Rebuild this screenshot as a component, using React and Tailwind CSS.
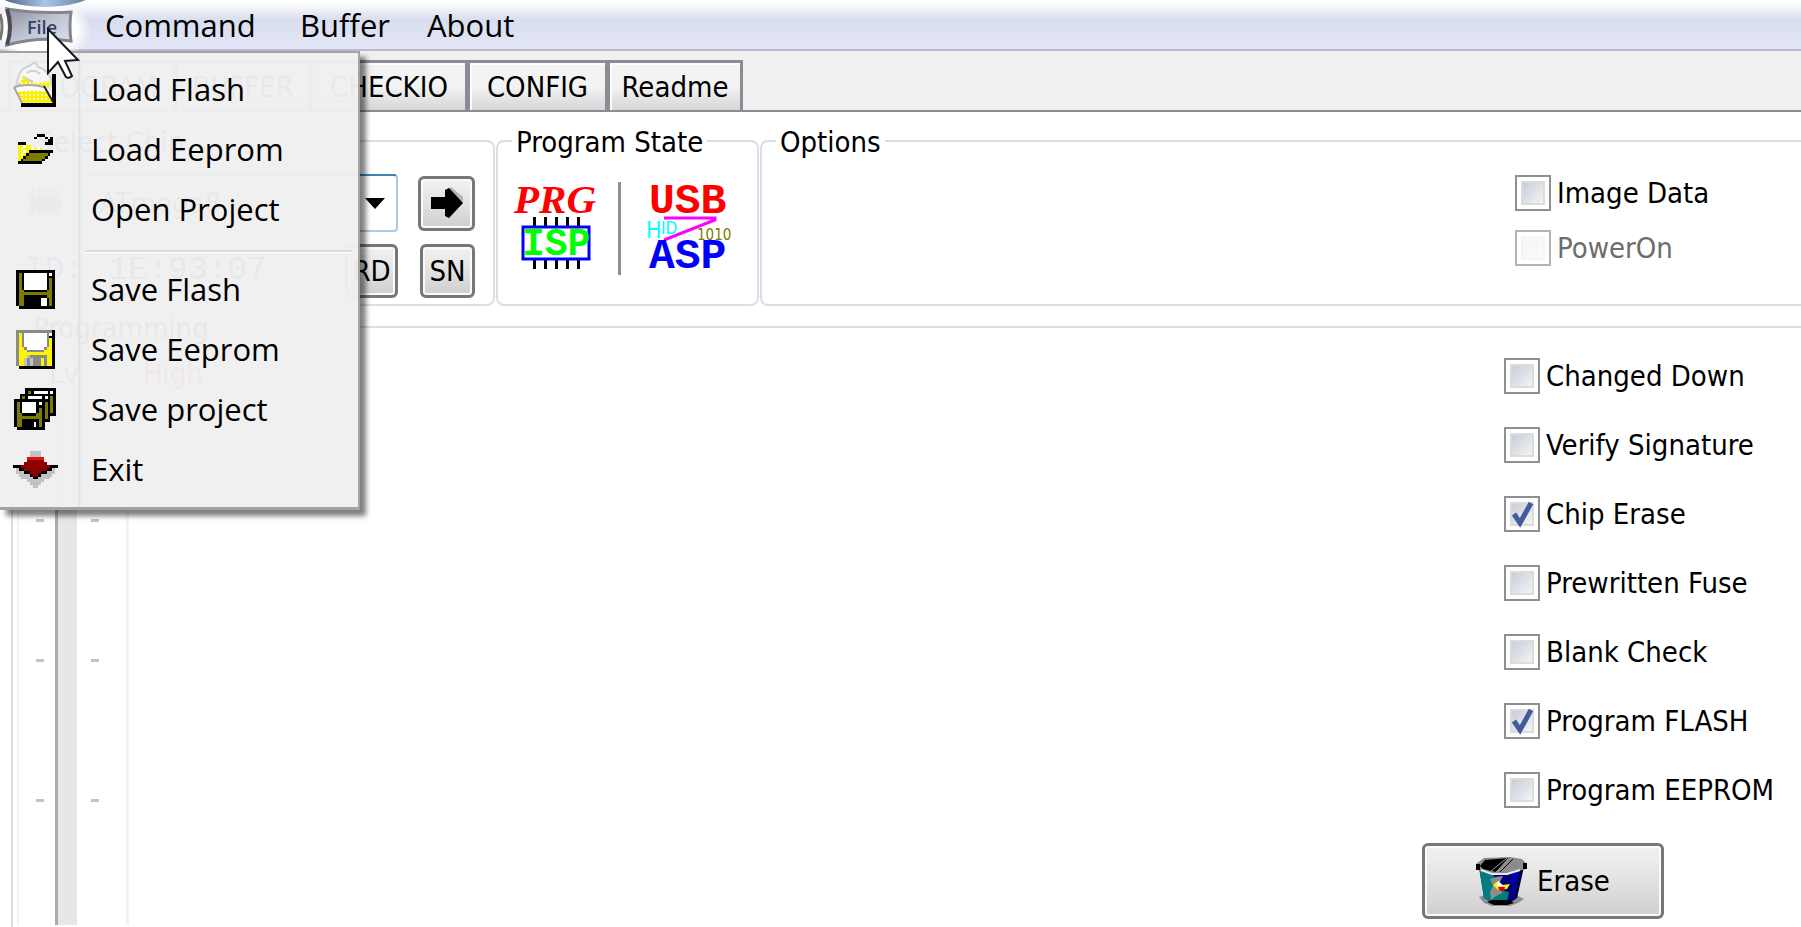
const COLORS = {
  K: "#000000",
  O: "#7d7a00",
  W: "#ffffff",
  Y: "#fdf500",
  G: "#8a8a8a",
  L: "#c2c2c2",
  R: "#e01010",
  D: "#8c0000",
};

function PixelIcon({ rows, className }) {
  const width = Math.max(...rows.map((r) => r.length));
  return (
    <svg className={className} viewBox={`0 0 ${width} ${rows.length}`} preserveAspectRatio="none" shapeRendering="crispEdges" aria-hidden="true">
      {rows.flatMap((row, y) =>
        [...row].map((c, x) =>
          COLORS[c] ? <rect key={`${x}-${y}`} x={x} y={y} width="1" height="1" fill={COLORS[c]} /> : null
        )
      )}
    </svg>
  );
}

const FOLDER = [
  ".......KKK...",
  "......K...K.K",
  "...........KK",
  "KKK.......KKK",
  "YYWYY........",
  "YWYYYWYWY....",
  "YYWYKKKKKKKKK",
  "YWYKOOOOOOOK.",
  "YYKOOOOOOOK..",
  "YKOOOOOOOK...",
  "KKKKKKKKK....",
];

const FLOPPY = [
  "KKKKKKKKKKKKKK",
  "KOKWWWWWWWWKWK",
  "KOKWWWWWWWWKKK",
  "KOKWWWWWWWWKOK",
  "KOKWWWWWWWWKOK",
  "KOKWWWWWWWWKOK",
  "KOKWWWWWWWWKOK",
  "KOOKKKKKKKKOOK",
  "KOOOOOOOOOOOOK",
  "KOOKKKKKKKKOOK",
  "KOOKKKKKKWWKOK",
  "KOOKKKKKKWWKOK",
  "KOOKKKKKKWWKOK",
  ".KKKKKKKKKKKKK",
];

const FLOPPY_YELLOW = [
  "GGGGGGGGGGGGGK",
  "GYGWWWWWWWWGWK",
  "GYGWWWWWWWWGKK",
  "GYGWWWWWWWWGYK",
  "GYGWWWWWWWWGYK",
  "GYGWWWWWWWWGYK",
  "GYYGWWWWWWGYYK",
  "GYYYGGGGGGYYYK",
  "GYYYYYYYYYYYYK",
  "GYYYLGGGGGGYYK",
  "GYYLGLGGGYGYYK",
  "GYYLGLGGGYGYYK",
  "GYYLGLGGGYGYYK",
  ".KKKKKKKKKKKKK",
];

const FLOPPIES = [
  "....KKKKKKKKKKK",
  "....KOKWWWWWKWK",
  "..KKKKKKKKKKKKK",
  "..KOKWWWWWKWKOK",
  "KKKKKKKKKKKKKOK",
  "KOKWWWWWKWKOKOK",
  "KOKWWWWWKKKOKOK",
  "KOKWWWWWKOKOKOK",
  "KOKWWWWWKOKOKOK",
  "KOOKKKKKOOKOKKK",
  "KOOOOOOOOOKOK..",
  "KOOKKKKKKOKKK..",
  "KOOKKKKWKOK....",
  "KOOKKKKWKOK....",
  ".KKKKKKKKKK....",
];

const EXIT = [
  "......LLLL......",
  "......LLLL......",
  ".....RRRRRR.....",
  ".....DDDDDD.....",
  "....DDDDDDDD....",
  "KKKDDDDDDDDDDKKK",
  ".LKKDDDDDDDDKKL.",
  ".LLLKKDDDDKKLLL.",
  "..LLLLKDDKLLLL..",
  "...LLLLKKLLLL...",
  ".....LLLLLL.....",
  "......LLLL......",
  ".......LL.......",
];

function MagnifiedFolder() {
  return (
    <svg className="mb-2 h-[46px] w-[44px]" viewBox="0 0 44 46" aria-hidden="true">
      <defs>
        <pattern id="dots" width="4" height="4" patternUnits="userSpaceOnUse">
          <rect width="4" height="4" fill="#f8f000" />
          <rect width="2" height="2" fill="#fffbb0" />
        </pattern>
      </defs>
      <path d="M4 22 Q5 7 16 4 L22 0 L25 5 Q37 8 39 22 Z" fill="#f6f6f6" stroke="#d2d2d2" strokeWidth="2" />
      <path d="M7 22 L10 13 L18 19 L24 21 L37 19 L37 26 L7 25 Z" fill="url(#dots)" />
      <path d="M14 11 Q21 6 27 12 M12 16 L20 20" fill="none" stroke="#cfcfcf" strokeWidth="2" />
      <path d="M39 12 H43 V45 H8 V41 H39 Z" fill="#000" />
      <path d="M1 25 Q16 21 31 25 L40 41 H9 Z" fill="url(#dots)" />
      <path d="M1 24 Q16 20 31 24 L34 30 Q18 27 4 30 Z" fill="#ffffff" />
      <path d="M1 25 Q16 21 31 25 M1 25 L9 41" fill="none" stroke="#a6a6a6" strokeWidth="2" />
      <path d="M31 24 L40 40" fill="none" stroke="#222" strokeWidth="2" />
    </svg>
  );
}

function Bin() {
  return (
    <svg className="h-[51px] w-[51px]" viewBox="0 0 51 51" aria-hidden="true">
      <path d="M3 41 L12 38 H38 L48 43 L42 47 L34 50 H16 L8 47 Z" fill="#8e8e8e" />
      <path d="M3 11 L8 42 L18 47 H34 L41 42 L48 11 Z" fill="#000080" />
      <path d="M3 11 L8 42 L16 46 H31 L33 36 L24 34 L17 18 Z" fill="#007d7d" />
      <path d="M14 23 L20 21 L27 20 L24 26 L20 29 L24 34 L27 37 L20 40 L15 44 L14 36 L17 30 Z" fill="#8c8c8c" />
      <path d="M36 17 L44 14 L41 24 L36 31 Z" fill="#0000b8" />
      <path d="M17 29 L22 25 L26 29 L34 28 L31 33 L22 34 Z" fill="#ffee00" />
      <path d="M22 31 H29 L28 35 L23 34 Z" fill="#e00000" />
      <path d="M22 25 L28 30 L21 30 Z" fill="#ffffff" />
      <path d="M16 44 H33 L38 47 L31 49 H18 L11 46 Z" fill="#000" />
      <path d="M0 8 L8 2 L34 1 L46 3 L51 8 L50 13 L43 15 L30 19 L16 18 L4 15 L0 12 Z" fill="#8b8b8b" />
      <path d="M4 10 L9 4 L32 2 L20 16 L7 13 Z" fill="#000" />
      <path d="M20 16 L34 3 M15 15 L31 2" stroke="#9a9a9a" strokeWidth="1" />
      <path d="M24 16 L37 3" stroke="#000" strokeWidth="1" />
      <path d="M0 8 h4 v6 h-4 Z M47 7 h4 v6 h-4 Z" fill="#000" />
      <path d="M5 14 L16 18 L31 18 L44 14" fill="none" stroke="#e8e8e8" strokeWidth="2" />
      <path d="M45 15 L40 41" stroke="#000" strokeWidth="2" strokeDasharray="4 2" />
    </svg>
  );
}

function IspLogo() {
  return (
    <svg className="h-[90px] w-[86px] overflow-visible" viewBox="0 0 86 90" role="img" aria-label="PRG ISP">
      <text x="2" y="31" fontFamily="'Liberation Serif', serif" fontStyle="italic" fontWeight="700" fontSize="41" fill="#ff0000">PRG</text>
      <g fill="#000">
        {[21, 32, 43, 54, 65].map((x) => (
          <g key={x}>
            <rect x={x} y="35" width="3" height="9" />
            <rect x={x} y="77" width="3" height="10" />
          </g>
        ))}
      </g>
      <rect x="11" y="45" width="66" height="32" fill="#fff" stroke="#0000ff" strokeWidth="3" />
      <text x="10" y="73" fontFamily="'Liberation Mono', monospace" fontWeight="700" fontSize="38" fill="#00ff00">ISP</text>
    </svg>
  );
}

function UsbLogo() {
  return (
    <svg className="h-[90px] w-[86px] overflow-visible" viewBox="0 0 86 90" role="img" aria-label="USB HID ASP">
      <text x="1" y="31" fontFamily="'Liberation Mono', monospace" fontWeight="700" fontSize="43" fill="#ff0000">USB</text>
      <text x="-2" y="56" fontFamily="'DejaVu Sans Condensed', 'DejaVu Sans', sans-serif" fontSize="23" fill="#00ffff">H</text>
      <text x="13" y="52" fontFamily="'DejaVu Sans Condensed', 'DejaVu Sans', sans-serif" fontSize="17" fill="#00ffff">ID</text>
      <path d="M16 36 H67 V38 L16 58" fill="none" stroke="#ff00ff" strokeWidth="3" />
      <text x="49" y="58" fontFamily="'DejaVu Sans Condensed', 'DejaVu Sans', sans-serif" fontSize="15" fill="#7d7a00">1010</text>
      <text x="1" y="86" fontFamily="'Liberation Mono', monospace" fontWeight="700" fontSize="43" fill="#0000ff">ASP</text>
    </svg>
  );
}

function CheckOption({ id, label, checked = false, disabled = false }) {
  return (
    <div className="flex h-9 items-center gap-[6px]">
      <span className="grid size-9 shrink-0">
        <input
          id={id}
          type="checkbox"
          defaultChecked={checked}
          disabled={disabled}
          className="peer col-start-1 row-start-1 size-9 appearance-none border-2 border-[#8e8f8f] bg-linear-to-br from-[#bcc3cf] to-[#ffffff] bg-clip-content p-[5px] disabled:border-[#b4b4b4] disabled:from-[#f6f6f6] disabled:to-[#fafafa]"
        />
        <span className="pointer-events-none col-start-1 row-start-1 m-[6px] border-2 border-[#dcdcdc] peer-disabled:border-[#f4f4f4]" />
        <svg className="pointer-events-none col-start-1 row-start-1 hidden size-9 peer-checked:block" viewBox="0 0 36 36" aria-hidden="true">
          <path d="M10 18 L16 27 L27 7" fill="none" stroke="#435a9c" strokeWidth="5" />
        </svg>
      </span>
      <label htmlFor={id} className={disabled ? "whitespace-nowrap text-[#6d6d6d]" : "whitespace-nowrap"}>
        {label}
      </label>
    </div>
  );
}

const BUTTON =
  "flex items-center justify-center rounded-md border-[3px] border-[#777777] bg-linear-to-b from-[#f2f2f2] via-[#e2e2e2] to-[#cfcfcf] shadow-[inset_0_0_0_2px_#fafafa]";

const GROUP = "border-2 border-[#d8dfe6]";

const MENU_TOP = [
  { label: "Load Flash", icon: <MagnifiedFolder /> },
  { label: "Load Eeprom", icon: <PixelIcon rows={FOLDER} className="h-[30px] w-[35px]" /> },
  { label: "Open Project", icon: null },
];
const MENU_BOTTOM = [
  { label: "Save Flash", icon: <PixelIcon rows={FLOPPY} className="size-[39px]" /> },
  { label: "Save Eeprom", icon: <PixelIcon rows={FLOPPY_YELLOW} className="size-[39px]" /> },
  { label: "Save project", icon: <PixelIcon rows={FLOPPIES} className="size-[42px]" /> },
  { label: "Exit", icon: <PixelIcon rows={EXIT} className="h-[37px] w-[45px]" /> },
];

const STEPS = [
  { id: "changed", label: "Changed Down" },
  { id: "verify", label: "Verify Signature" },
  { id: "erase", label: "Chip Erase", checked: true },
  { id: "fuse", label: "Prewritten Fuse" },
  { id: "blank", label: "Blank Check" },
  { id: "flash", label: "Program FLASH", checked: true },
  { id: "eeprom", label: "Program EEPROM" },
];

function MenuRow({ item }) {
  return (
    <li role="none">
      <button role="menuitem" className="flex h-[60px] w-full items-center text-left">
        <span className="flex w-[70px] shrink-0 justify-center">{item.icon}</span>
        <span className="pl-[21px]">{item.label}</span>
      </button>
    </li>
  );
}

function FileMenu() {
  return (
    <div className="absolute top-[51px] left-0 z-10 w-[360px] border-t-2 border-r-2 border-b-3 border-[#a3a3a3] bg-[#f0f0f0]/97 font-['Open_Sans','Noto_Sans',sans-serif] text-[31px] leading-[42px] shadow-[6px_6px_5px_rgba(0,0,0,0.5)]">
      <ul role="menu" aria-label="File" className="bg-linear-to-r from-transparent from-[78px] via-[#dedede] via-[79px] to-transparent to-[81px] pt-[6px] pb-2">
        {MENU_TOP.map((item) => (
          <MenuRow key={item.label} item={item} />
        ))}
        <li role="separator" className="mt-[11px] mr-[6px] mb-[6px] ml-[85px] h-[3px] border-t-2 border-b border-t-[#dcdcdc] border-b-white" />
        {MENU_BOTTOM.map((item) => (
          <MenuRow key={item.label} item={item} />
        ))}
      </ul>
    </div>
  );
}

function FileButton() {
  return (
    <button className="grid h-full w-[93px] text-[18px] leading-5 text-[#2f4468]" aria-haspopup="menu" aria-expanded="true">
      <svg className="col-start-1 row-start-1 h-[54px] w-[93px]" viewBox="0 0 93 54" aria-hidden="true">
        <defs>
          <linearGradient id="lens" x1="0" y1="0" x2="1" y2="1">
            <stop offset="0" stopColor="#8d8f9c" />
            <stop offset="0.5" stopColor="#c1c4d2" />
            <stop offset="1" stopColor="#dde0ee" />
          </linearGradient>
          <linearGradient id="arc" x1="0" y1="0" x2="1" y2="0">
            <stop offset="0" stopColor="#41556e" />
            <stop offset="0.5" stopColor="#a9c6e8" />
            <stop offset="1" stopColor="#5b7694" />
          </linearGradient>
          <radialGradient id="glow">
            <stop offset="0.7" stopColor="#ffffff" />
            <stop offset="1" stopColor="#ffffff" stopOpacity="0" />
          </radialGradient>
        </defs>
        <ellipse cx="40" cy="30" rx="52" ry="34" fill="url(#glow)" />
        <ellipse cx="45" cy="-8" rx="48" ry="15" fill="url(#arc)" />
        <path d="M7 9 Q38 14 71 12 Q69 26 71 41 Q38 36 7 45 Q13 27 7 9 Z" fill="url(#lens)" stroke="#85858d" strokeWidth="3" />
        <path d="M7 9 Q13 27 7 45" fill="none" stroke="#4d4d55" strokeWidth="4" />
        <path d="M0 14 Q4 26 0 40" fill="none" stroke="#777" strokeWidth="3" />
      </svg>
      <span className="col-start-1 row-start-1 mt-[17px] ml-[27px] justify-self-start font-semibold">File</span>
    </button>
  );
}

function Ticks() {
  return (
    <div className="flex w-2 flex-col gap-[137px] pt-[117px]">
      <span className="h-[3px] bg-[#c4c4c4]" />
      <span className="h-[3px] bg-[#c4c4c4]" />
      <span className="h-[3px] bg-[#c4c4c4]" />
    </div>
  );
}

const TAB = "-mr-px h-[50px] border-[3px] border-b-0 border-[#8b8c95] bg-linear-to-b from-[#f3f3f3] from-50% to-[#d6d6d6] shadow-[inset_2px_2px_0_#fdfdfd]";

export default function App() {
  return (
    <div className="relative flex min-h-screen flex-col overflow-hidden bg-[#f0f0f0] font-['DejaVu_Sans_Condensed','DejaVu_Sans',sans-serif] text-[29px] leading-8 text-black">
      <nav className="flex h-[51px] items-start border-b-2 border-[#b9bccb] bg-linear-to-b from-white from-5% via-[#d9deee] via-40% to-[#e2e6f6] font-['Open_Sans','Noto_Sans',sans-serif] text-[31px] leading-[50px]">
        <FileButton />
        <button className="w-[195px] pl-3 text-left">Command</button>
        <button className="w-[127px] pl-3 text-left">Buffer</button>
        <button className="pl-3 text-left">About</button>
      </nav>

      <div role="tablist" className="flex pt-[9px] pl-2">
        <button role="tab" aria-selected="true" className="h-[50px] w-[167px] border-[3px] border-b-0 border-[#8b8c95] bg-white text-center">PROGRAM</button>
        <button role="tab" className={TAB + " w-[136px]"}>BUFFER</button>
        <button role="tab" className={TAB + " w-[158px]"}>CHECKIO</button>
        <button role="tab" className={TAB + " w-[141px]"}>CONFIG</button>
        <button role="tab" className={TAB + " w-[136px]"}>Readme</button>
      </div>

      <main className="flex flex-1 flex-col gap-1 border-t-2 border-[#8b8c95] bg-white pt-3 pl-[11px]">
        <div className="flex h-[182px] gap-px">
          <fieldset className={GROUP + " flex w-[484px] shrink-0 flex-col gap-3 rounded-lg pr-[18px] pl-3"}>
            <legend className="ml-2 px-1 pt-[2px]">Select Chip</legend>
            <div className="mt-4 flex items-center">
              <svg className="mr-6 h-9 w-10" viewBox="0 0 40 36" aria-hidden="true">
                <path d="M4 10 H36 V26 H4 Z" fill="#3c6a9c" />
                <path d="M8 4 V32 M14 4 V32 M20 4 V32 M26 4 V32 M32 4 V32" stroke="#3c6a9c" strokeWidth="3" />
              </svg>
              <div className="grid flex-1">
                <select aria-label="Chip" className="col-start-1 row-start-1 h-[58px] appearance-none rounded-sm border-2 border-[#a9cbe4] border-t-[#4383ae] bg-white px-2">
                  <option>ATmega8</option>
                </select>
                <svg className="pointer-events-none col-start-1 row-start-1 mr-[13px] h-3 w-5 self-center justify-self-end" viewBox="0 0 20 12" aria-hidden="true">
                  <path d="M0 1 H20 L10 12 Z" fill="#000" />
                </svg>
              </div>
              <button aria-label="Next" className={BUTTON + " ml-5 h-[55px] w-[57px]"}>
                <svg className="h-8 w-9" viewBox="0 0 36 32" aria-hidden="true">
                  <path d="M18 3 L22 0 L34 10 L34 15 Z" fill="#b5b5b5" />
                  <path d="M2 10 H16 V3 L20 1 L34 16 L20 31 L16 29 V22 H2 Z" fill="#000" />
                </svg>
              </button>
            </div>
            <div className="flex items-center justify-end">
              <output className="mr-auto flex gap-6 font-['Liberation_Mono',monospace] text-[33px]">
                <span className="text-[#0000ff]">ID:</span>
                <span>1E:93:07</span>
              </output>
              <button className={BUTTON + " mr-[22px] h-[54px] w-[53px]"}>RD</button>
              <button className={BUTTON + " h-[54px] w-[55px]"}>SN</button>
            </div>
          </fieldset>

          <fieldset className={GROUP + " flex w-[263px] shrink-0 rounded-lg pl-[14px]"}>
            <legend className="px-1 pt-[2px]">Program State</legend>
            <div className="mt-6 flex h-[93px] items-start">
              <IspLogo />
              <span className="mr-[27px] ml-5 h-full w-[3px] bg-[#909090]" />
              <UsbLogo />
            </div>
          </fieldset>

          <fieldset className={GROUP + " flex-1 rounded-l-lg border-r-0"}>
            <legend className="ml-[14px] px-1 pt-[2px]">Options</legend>
            <div className="mt-[17px] ml-auto flex w-[286px] flex-col gap-[19px]">
              <CheckOption id="image" label="Image Data" />
              <CheckOption id="power" label="PowerOn" disabled />
            </div>
          </fieldset>
        </div>

        <fieldset className={GROUP + " flex flex-1 rounded-tl-lg border-r-0 border-b-0"}>
          <legend className="ml-4 px-1 pt-[2px]">Programming</legend>
          <div className="flex h-full w-full">
            <div className="flex flex-col pl-1">
              <p className="flex h-[58px] items-center gap-16 pl-8 text-[29px]">
                <span>Lv</span>
                <span className="text-[#e00000]">High</span>
              </p>
              <div className="flex w-[112px] flex-1 border-r-3 border-l-2 border-[#f2f4f4]">
                <div className="flex pl-[17px]">
                  <Ticks />
                </div>
                <span className="ml-[11px] w-[22px] border-l-3 border-[#acacac] bg-[#e6e8e8]" />
                <div className="flex pl-[14px]">
                  <Ticks />
                </div>
              </div>
            </div>
            <div className="ml-auto w-[379px] pt-[14px] pb-[6px]">
              <div className="flex flex-col gap-[33px] pl-[82px]">
                {STEPS.map((s) => (
                  <CheckOption key={s.id} {...s} />
                ))}
              </div>
              <button className={BUTTON + " mt-[35px] h-[76px] w-[242px] gap-[10px]"}>
                <Bin />
                Erase
              </button>
            </div>
          </div>
        </fieldset>
      </main>

      <FileMenu />

      <svg className="pointer-events-none absolute top-[27px] left-[46px] z-20 h-[54px] w-[36px]" viewBox="0 0 36 54" aria-hidden="true">
        <path d="M2 2 V46 L12 35 L20 50 Q23 52 26 49 L19 34 L32 33 Z" fill="#fff" stroke="#15151f" strokeWidth="2" />
      </svg>
    </div>
  );
}
